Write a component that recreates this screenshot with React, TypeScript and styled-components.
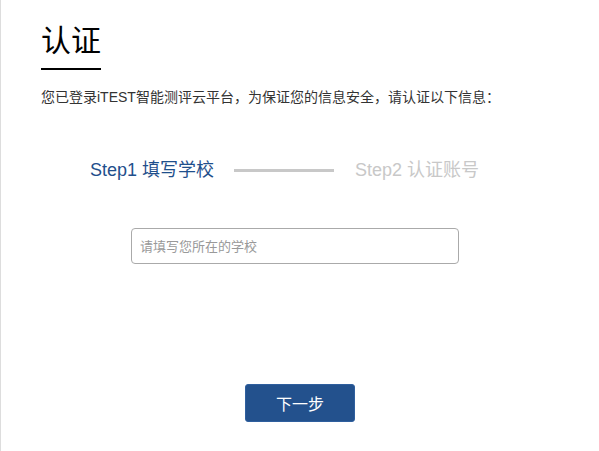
import React from "react";
import styled, { createGlobalStyle } from "styled-components";

const GlobalStyle = createGlobalStyle`
  body {
    margin: 0;
    background: #ffffff;
    font-family: "Liberation Sans", Arial, "Noto Sans CJK SC", sans-serif;
  }
`;

const Page = styled.div`
  min-height: 451px;
  box-sizing: border-box;
  border-left: 1px solid #dddddd;
  padding-left: 40px;
  display: flex;
  flex-direction: column;
  align-items: flex-start;
`;

const Title = styled.h1`
  margin: 0;
  padding-top: 23px;
  padding-bottom: 9px;
  font-size: 30px;
  line-height: 36px;
  font-weight: normal;
  color: #000000;
  border-bottom: 2px solid #000000;
`;

const Intro = styled.p`
  margin: 17px 0 0;
  font-size: 14px;
  line-height: 20px;
  color: #333333;
`;

const Steps = styled.div`
  margin: 51px 0 0 49px;
  display: flex;
  align-items: center;
  gap: 20px;
  height: 24px;
`;

const Step = styled.span<{ $active?: boolean }>`
  font-size: 18px;
  line-height: 24px;
  color: ${(p) => (p.$active ? "#1f4f8c" : "#c8c8c8")};
  white-space: nowrap;
`;

const Connector = styled.span`
  display: block;
  width: 100px;
  height: 3px;
  background: #c8c8c8;
  margin-right: 1px;
`;

const SchoolInput = styled.input`
  margin: 46px 0 0 90px;
  width: 328px;
  height: 36px;
  box-sizing: border-box;
  border: 1px solid #aaaaaa;
  border-radius: 4px;
  padding: 0 8px;
  font-family: inherit;
  font-size: 13px;
  color: #333333;
  outline: none;

  &::placeholder {
    color: #999999;
  }
`;

const NextButton = styled.button`
  margin: 120px 0 0 204px;
  width: 110px;
  height: 38px;
  border: 1px solid #2f5f9e;
  border-radius: 3px;
  background: #23518d;
  color: #ffffff;
  font-family: inherit;
  font-size: 16px;
  cursor: pointer;
`;

const App = () => {
  return (
    <Page>
      <GlobalStyle />
      <Title>认证</Title>
      <Intro>您已登录iTEST智能测评云平台，为保证您的信息安全，请认证以下信息：</Intro>
      <Steps>
        <Step $active>Step1 填写学校</Step>
        <Connector />
        <Step>Step2 认证账号</Step>
      </Steps>
      <SchoolInput placeholder="请填写您所在的学校" />
      <NextButton>下一步</NextButton>
    </Page>
  );
};

export default App;
